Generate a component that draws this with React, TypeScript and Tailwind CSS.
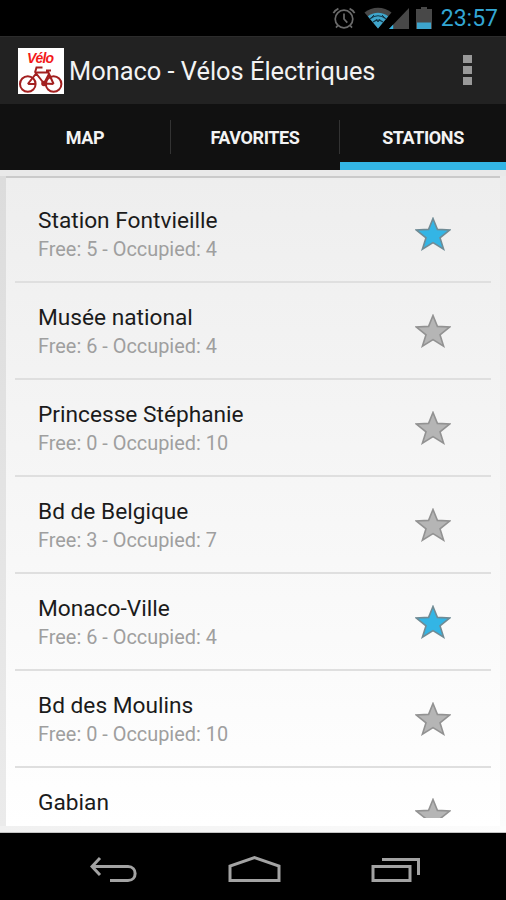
import React from 'react';

interface Station {
  name: string;
  free: number;
  occupied: number;
  isFavorite: boolean;
}

const stations: Station[] = [
  { name: 'Station Fontvieille', free: 5, occupied: 4, isFavorite: true },
  { name: 'Musée national', free: 6, occupied: 4, isFavorite: false },
  { name: 'Princesse Stéphanie', free: 0, occupied: 10, isFavorite: false },
  { name: 'Bd de Belgique', free: 3, occupied: 7, isFavorite: false },
  { name: 'Monaco-Ville', free: 6, occupied: 4, isFavorite: true },
  { name: 'Bd des Moulins', free: 0, occupied: 10, isFavorite: false },
];

const StarIcon: React.FC<{ active: boolean }> = ({ active }) => (
  <svg viewBox="0 0 36 34" className="w-9 h-[34px] shrink-0">
    <path
      d="M18 1.5L22.4 12.4L34.6 13L25 20.8L28.6 32.2L18 25.6L7.4 32.2L11 20.8L1.4 13L13.6 12.4Z"
      fill={active ? '#33b5e5' : '#b5b5b5'}
      stroke={active ? '#6f8b95' : '#929292'}
      strokeWidth="1.6"
    />
  </svg>
);

const StatusBar: React.FC = () => (
  <div className="flex h-9 shrink-0 items-center justify-end bg-black pr-2">
    {/* Alarm */}
    <svg viewBox="0 0 24 24" className="w-6 h-6 mr-2" fill="none" stroke="#6b6b6b" strokeWidth="1.7">
      <circle cx="12" cy="13" r="8.8" />
      <path d="M12 7.5V13l3.3 3.6M1.4 7.2a10 10 0 0 1 5-4.6M22.6 7.2a10 10 0 0 0-5-4.6M5.8 19.5L4 21.6M18.2 19.5L20 21.6" />
    </svg>
    {/* Wifi */}
    <svg viewBox="0 0 28 22" className="w-7 h-[22px]">
      <path d="M0.5 5.5C8 -.8 20 -.8 27.5 5.5L14 21.5Z" fill="#484848" />
      <path d="M3.8 9.3C9.5 4.6 18.5 4.6 24.2 9.3L14 21.5Z" fill="#3fa5cb" />
      <path d="M6 11.8c5-3.8 11-3.8 16 0M9 15c3-2.3 7-2.3 10 0" fill="none" stroke="#12384a" strokeWidth="1.1" />
      <path d="M10 8l-3 3M18 8l3 3M12 12l2 3 2-3" fill="none" stroke="#12384a" strokeWidth="1" />
    </svg>
    {/* Cell signal */}
    <svg viewBox="0 0 20 21" className="-ml-[3px] w-5 h-[21px]">
      <path d="M20 0V21H0Z" fill="#484848" />
      <path d="M4.2 16.5V21H0Z" fill="#33b5e5" />
    </svg>
    {/* Battery */}
    <svg viewBox="0 0 16 22" className="ml-[7px] mr-[9px] w-4 h-[22px]">
      <path d="M5 0h6v2h5v20H0V2h5Z" fill="#484848" />
      <path d="M1 15.5h14V22H1Z" fill="#3da5cd" />
    </svg>
    <span className="pt-0.5 text-[23px] leading-[34px] text-[#33a6d3]">23:57</span>
  </div>
);

const AppLogo: React.FC = () => (
  <svg viewBox="0 0 46 46" className="w-[46px] h-[46px] shrink-0">
    <rect width="46" height="46" fill="#fff" />
    <text x="9" y="14.5" fill="#f31919" fontSize="14" fontWeight="700" fontStyle="italic" fontFamily="Liberation Sans Narrow, Liberation Sans, sans-serif" textLength="27" lengthAdjust="spacing">Vélo</text>
    <g fill="none" stroke="#a32020" strokeWidth="2">
      <circle cx="9.8" cy="36" r="7.8" />
      <circle cx="35.6" cy="36" r="7.8" />
      <path d="M9.8 36L19 24.5H31M31 26L26 35.5L17 24M9.8 36L17 36M17 24.5L18.5 19.5H24.5M35.6 36L29.5 22.5M26 35.5L35.6 36M28 22.5H33" />
      <circle cx="26" cy="35.5" r="1.8" />
    </g>
  </svg>
);

const ActionBar: React.FC = () => (
  <header className="flex h-[68px] shrink-0 items-center border-t border-[#2c2c2c] bg-[#222] pl-[18px] pr-[34px]">
    <AppLogo />
    <h1 className="ml-[5px] pt-px whitespace-nowrap text-[25.4px] leading-8 text-[#f3f3f3]">Monaco - Vélos Électriques</h1>
    <div className="mb-px ml-auto flex flex-col gap-[3px]">
      <span className="w-[9px] h-2 bg-[#999]" />
      <span className="w-[9px] h-2 bg-[#999]" />
      <span className="w-[9px] h-2 bg-[#999]" />
    </div>
  </header>
);

const tabClass = 'flex items-center justify-center text-[18px] font-bold tracking-[-0.4px] text-[#f3f3f3]';

const Tabs: React.FC = () => (
  <nav className="grid h-[66px] shrink-0 grid-cols-[171px_169px_166px] bg-[#111]">
    <div className={tabClass}>
      <span className="flex-1 text-center">MAP</span>
      <span className="h-[34px] w-px bg-[#333]" />
    </div>
    <div className={tabClass}>
      <span className="flex-1 text-center">FAVORITES</span>
      <span className="h-[34px] w-px bg-[#333]" />
    </div>
    <div className={`${tabClass} border-b-8 border-[#33b5e5] pt-2`}>
      <span>STATIONS</span>
    </div>
  </nav>
);

const StationRow: React.FC<{ station: Station }> = ({ station }) => (
  <li className="flex h-[97px] shrink-0 items-center justify-between border-b-2 border-[#dfdfdf] pl-[23px] pr-10">
    <div className="pt-[3px]">
      <p className="text-[22.7px] leading-7 text-[#1b1b1b]">{station.name}</p>
      <p className="pt-px text-[19.9px] leading-7 text-[#9f9f9f]">
        Free: {station.free} - Occupied: {station.occupied}
      </p>
    </div>
    <StarIcon active={station.isFavorite} />
  </li>
);

const NavigationBar: React.FC = () => (
  <footer className="flex h-[67px] shrink-0 items-center justify-between bg-black pl-[90px] pr-[85px] pt-1.5">
    <svg viewBox="0 0 47 28" className="w-[47px] h-7" fill="none" stroke="#a3a3a3" strokeWidth="3">
      <path d="M10 2L2 10.5L10 19M2 10.5H38C47.5 10.5 47.5 24.5 38 24.5H20" />
    </svg>
    <svg viewBox="0 0 53 28" className="w-[53px] h-7" fill="none" stroke="#a3a3a3" strokeWidth="3">
      <path d="M2 24.5V10L26.5 1.6L51 10V24.5Z" />
    </svg>
    <svg viewBox="0 0 50 28" className="w-[50px] h-7" fill="none" stroke="#a3a3a3" strokeWidth="3">
      <path d="M2 10.5H39V24.5H2ZM11 3.5H47.5V19" />
    </svg>
  </footer>
);

const App: React.FC = () => {
  return (
    <div className="flex h-[900px] w-[506px] flex-col overflow-hidden bg-black font-['Roboto','Noto_Sans',sans-serif]">
      <StatusBar />
      <ActionBar />
      <Tabs />
      <main className="flex h-[663px] shrink-0 flex-col border-b border-[#c4c4c4]">
        <div className="h-1.5 shrink-0 bg-[#e9e9e9]" />
        <div className="flex h-[650px] shrink-0">
          <div className="w-1.5 shrink-0 bg-linear-to-b from-[#dcdcdc] to-[#ebebeb]" />
          <div className="flex w-[494px] flex-col overflow-hidden border-t-2 border-[#cacaca] bg-linear-to-b from-[#eee] to-white px-[9px] pt-2">
            <ul className="flex h-[632px] flex-col overflow-hidden">
              {stations.map((station) => (
                <StationRow key={station.name} station={station} />
              ))}
              <li className="flex shrink-0 items-start justify-between pl-[23px] pr-10 pt-5">
                <p className="pt-px text-[22.7px] leading-7 text-[#1b1b1b]">Gabian</p>
                <div className="pt-2.5">
                  <StarIcon active={false} />
                </div>
              </li>
            </ul>
          </div>
          <div className="w-1.5 shrink-0 bg-linear-to-b from-[#ebebeb] to-[#fbfbfb]" />
        </div>
        <div className="flex-1 bg-linear-to-r from-[#f0f0f0] to-[#fcfcfc]" />
      </main>
      <NavigationBar />
    </div>
  );
};

export default App;
